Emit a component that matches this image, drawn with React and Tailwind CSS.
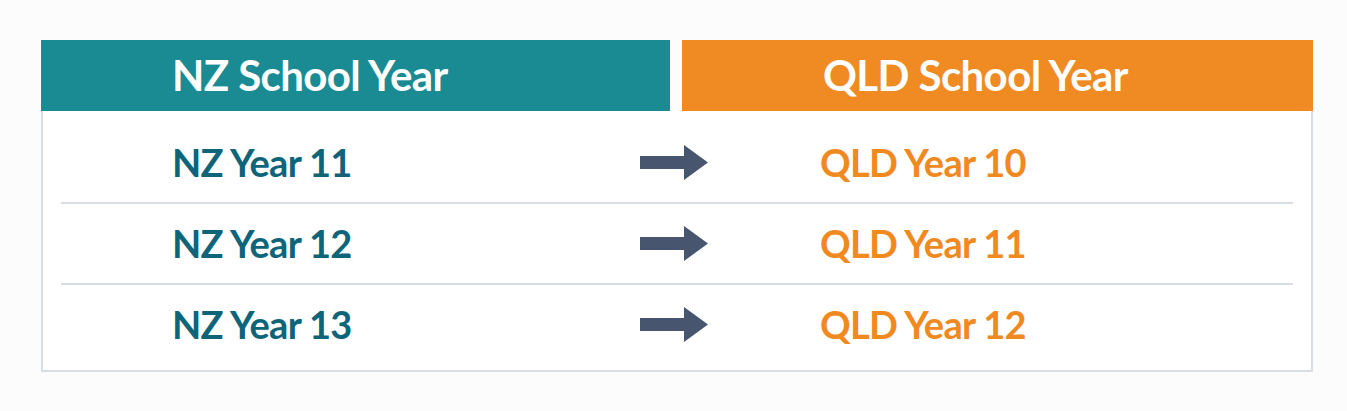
import React from "react";

const rows = [
  ["NZ Year 11", "QLD Year 10"],
  ["NZ Year 12", "QLD Year 11"],
  ["NZ Year 13", "QLD Year 12"],
];

function Arrow() {
  return (
    <svg width="68" height="35" viewBox="0 0 68 35" className="shrink-0">
      <path d="M0 11 H44 V0 L68 17.5 L44 35 V24 H0 Z" fill="#47566e" />
    </svg>
  );
}

export default function App() {
  return (
    <div
      className="w-[1347px] h-[411px] bg-[#fcfcfd] pt-[40px] pl-[41px]"
      style={{ fontFamily: "Lato, 'Open Sans', sans-serif" }}
    >
      <div className="w-[1272px]">
        <div className="flex h-[71px]">
          <div className="w-[629px] bg-[#1a8a93] flex items-center pl-[131px] text-white font-bold text-[42px] tracking-[-0.6px]">
            NZ School Year
          </div>
          <div className="w-[12px]" />
          <div className="flex-1 bg-[#f08a22] flex items-center pl-[141px] text-white font-bold text-[42px] tracking-[-0.6px]">
            QLD School Year
          </div>
        </div>
        <div className="border-2 border-t-0 border-[#d8dde4] bg-white px-[18px] pt-[12px] pb-[6px]">
          {rows.map(([nz, qld], i) => (
            <div key={i}>
              {i > 0 && <div className="h-[2px] bg-[#d9dde4]" />}
              <div className="flex items-center h-[79px]">
                <div className="w-[579px] pl-[111px] text-[#0e6478] font-bold text-[38px] tracking-[-0.7px]">
                  {nz}
                </div>
                <Arrow />
                <div className="ml-[112px] text-[#f0891f] font-bold text-[38px] tracking-[-0.7px]">
                  {qld}
                </div>
              </div>
            </div>
          ))}
        </div>
      </div>
    </div>
  );
}
